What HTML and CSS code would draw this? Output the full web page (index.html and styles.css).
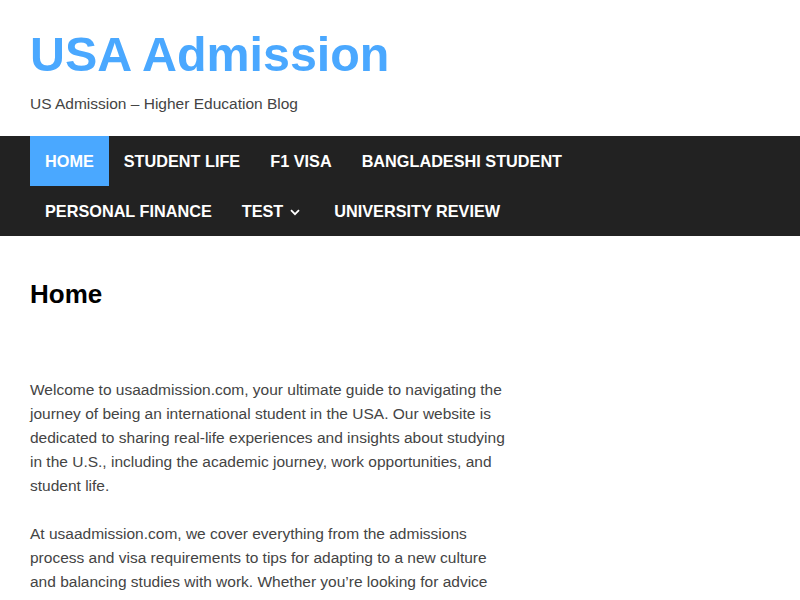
FILE: index.html
```html
<!DOCTYPE html>
<html>
<head>
  <title>USA Admission</title>
  <link rel="stylesheet" href="styles.css">
</head>
<body>
  <header class="site-header">
    <h1 class="site-title">USA Admission</h1>
    <p class="site-description">US Admission &ndash; Higher Education Blog</p>
  </header>

  <nav class="main-nav">
    <ul class="menu">
      <li class="menu-item current"><a href="#">Home</a></li>
      <li class="menu-item"><a href="#">Student Life</a></li>
      <li class="menu-item"><a href="#">F1 Visa</a></li>
      <li class="menu-item"><a href="#">Bangladeshi Student</a></li>
      <li class="menu-item"><a href="#">Personal Finance</a></li>
      <li class="menu-item has-children">
        <a href="#">Test
          <svg class="dropdown-icon" width="10" height="7" viewBox="0 0 10 7" aria-hidden="true">
            <path d="M1 1.2 L5 5.2 L9 1.2" fill="none" stroke="currentColor" stroke-width="1.8"/>
          </svg>
        </a>
      </li>
      <li class="menu-item"><a href="#">University Review</a></li>
    </ul>
  </nav>

  <main class="site-content">
    <article class="page">
      <h2 class="entry-title">Home</h2>
      <div class="entry-content">
        <p>Welcome to usaadmission.com, your ultimate guide to navigating the journey of being an international student in the USA. Our website is dedicated to sharing real-life experiences and insights about studying in the U.S., including the academic journey, work opportunities, and student life.</p>
        <p>At usaadmission.com, we cover everything from the admissions process and visa requirements to tips for adapting to a new culture and balancing studies with work. Whether you&rsquo;re looking for advice on university life, exploring career options, or connecting with other students, our blog is here to help you every step of the way.</p>
      </div>
    </article>
  </main>
</body>
</html>
```

FILE: styles.css
```css
body {
  margin: 0;
  font-family: "Liberation Sans", Arial, sans-serif;
  font-size: 15.5px;
  color: #444;
  background-color: #fff;
}
.site-header {
  padding: 25px 30px 20px 30px;
}
.site-title {
  margin: 0 0 9px 0;
  font-size: 48.4px;
  line-height: 58px;
  font-weight: bold;
  color: #4aa8ff;
}
.site-description {
  margin: 0;
  line-height: 24px;
  color: #444;
}
.main-nav {
  background-color: #222;
  padding: 0 30px;
}
.menu {
  display: flex;
  flex-wrap: wrap;
  margin: 0;
  padding: 0;
  list-style: none;
}
.menu-item a {
  display: flex;
  align-items: center;
  height: 50px;
  padding: 0 15px;
  color: #fff;
  font-size: 16.25px;
  font-weight: bold;
  text-transform: uppercase;
  text-decoration: none;
}
.menu-item.current a {
  background-color: #4aa8ff;
}
.has-children a {
  padding-right: 19px;
}
.dropdown-icon {
  margin-left: 7px;
  margin-top: 2px;
}
.site-content {
  padding: 40px 30px 0 30px;
}
.page {
  width: 477px;
}
.entry-title {
  margin: 0 0 66px 0;
  font-size: 26px;
  line-height: 36px;
  color: #000;
}
.entry-content p {
  margin: 0 0 24px 0;
  line-height: 24px;
}
```
